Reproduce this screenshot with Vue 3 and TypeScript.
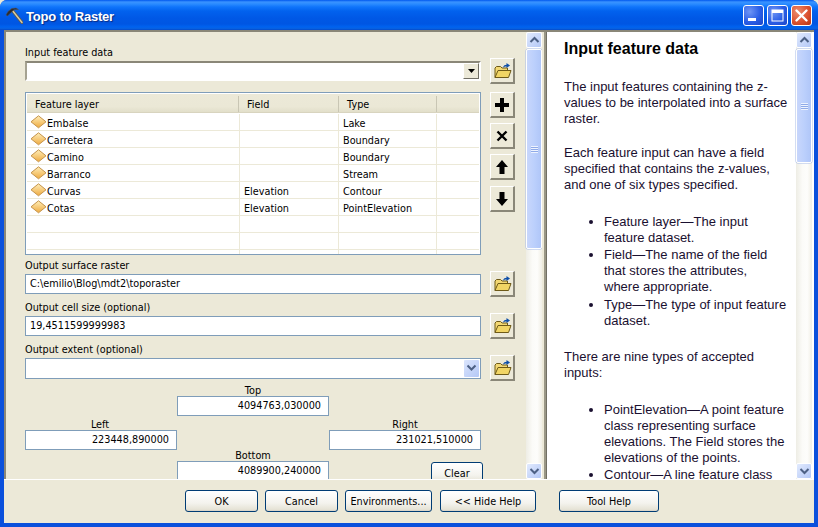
<script setup lang="ts">
interface Row { name: string; field: string; type: string }
const rows: Row[] = [
  { name: 'Embalse', field: '', type: 'Lake' },
  { name: 'Carretera', field: '', type: 'Boundary' },
  { name: 'Camino', field: '', type: 'Boundary' },
  { name: 'Barranco', field: '', type: 'Stream' },
  { name: 'Curvas', field: 'Elevation', type: 'Contour' },
  { name: 'Cotas', field: 'Elevation', type: 'PointElevation' },
  { name: '', field: '', type: '' },
  { name: '', field: '', type: '' },
  { name: '', field: '', type: '' },
]
</script>

<template>
  <div class="window">
    <header class="titlebar">
      <svg class="app-icon" width="18" height="18" viewBox="0 0 18 18">
        <path d="M7 4 L17 16.5" stroke="#5f5a4a" stroke-width="3" stroke-linecap="round" />
        <path d="M7 4 L17 16.5" stroke="#d8cda8" stroke-width="1.4" stroke-linecap="round" />
        <path d="M1 9 L3 5.5 L7 2.5 L11 2 L13.5 3.5 L9 3.8 L5.5 7 L2.5 10 Z" fill="#2c2c30" stroke="#55555a" stroke-width=".5" />
      </svg>
      <span class="title">Topo to Raster</span>
      <div class="caption-buttons">
        <div class="cap blue">
          <svg width="21" height="21" viewBox="0 0 21 21"><rect x="5" y="13" width="8" height="3" fill="#fff" /></svg>
        </div>
        <div class="cap blue">
          <svg width="21" height="21" viewBox="0 0 21 21"><rect x="5" y="5" width="11" height="11" fill="none" stroke="#fff" stroke-width="1" /><rect x="5" y="5" width="11" height="3" fill="#fff" /></svg>
        </div>
        <div class="cap red">
          <svg width="21" height="21" viewBox="0 0 21 21"><path d="M5.5 5.5 L15.5 15.5 M15.5 5.5 L5.5 15.5" stroke="#fff" stroke-width="2.4" stroke-linecap="round" /></svg>
        </div>
      </div>
    </header>

    <div class="client">
      <div class="panes">
        <section class="form-pane">
          <div class="form">
            <div class="label first">Input feature data</div>
            <div class="row">
              <div class="combo sunken">
                <div class="drop-classic">
                  <svg width="7" height="4" viewBox="0 0 7 4"><path d="M0 0 H7 L3.5 4 Z" fill="#000" /></svg>
                </div>
              </div>
              <button class="tool">
                <svg class="folder" width="18" height="17" viewBox="0 0 18 17">
                  <path d="M1 15.5 V6 L2.5 4.5 H6.5 L8 6 H13.5 V8" fill="#f3d873" stroke="#6e5a18" />
                  <path d="M1 15.5 L4 8.5 H17 L14.5 15.5 Z" fill="#f1d565" stroke="#6e5a18" />
                  <path d="M9 5.5 C9.5 3.5 11 2.8 12.5 2.8 V1 L16 3.5 L12.5 6 V4.4 C11 4.4 10 4.8 9 5.5 Z" fill="#0f4fa8" />
                </svg>
              </button>
            </div>

            <div class="list-row">
              <div class="table">
                <div class="thead">
                  <div class="th h1">Feature layer</div>
                  <div class="th h2">Field</div>
                  <div class="th c3">Type</div>
                  <div class="th c4"></div>
                </div>
                <div v-for="(r, i) in rows" :key="i" class="tr">
                  <div class="td c1">
                    <svg v-if="r.name" class="diamond" width="17" height="14" viewBox="0 0 17 14">
                      <defs>
                        <linearGradient id="gold" x1="0" y1="0" x2="0" y2="1">
                          <stop offset="0" stop-color="#ffeeb8" />
                          <stop offset="1" stop-color="#eeaa40" />
                        </linearGradient>
                      </defs>
                      <path d="M8.5 .8 L16 6.8 L8.5 12.8 L1 6.8 Z" fill="url(#gold)" stroke="#c4934a" />
                    </svg>
                    <span>{{ r.name }}</span>
                  </div>
                  <div class="td c2">{{ r.field }}</div>
                  <div class="td c3">{{ r.type }}</div>
                  <div class="td c4"></div>
                </div>
              </div>
              <div class="tools">
                <button class="tool">
                  <svg width="18" height="18" viewBox="0 0 18 18"><path d="M7 2 H11 V7 H16 V11 H11 V16 H7 V11 H2 V7 H7 Z" fill="#000" /></svg>
                </button>
                <button class="tool">
                  <svg width="14" height="14" viewBox="0 0 14 14"><path d="M2.5 2.5 L11.5 11.5 M11.5 2.5 L2.5 11.5" stroke="#000" stroke-width="2.4" /></svg>
                </button>
                <button class="tool">
                  <svg width="14" height="16" viewBox="0 0 14 16"><path d="M7 1 L13 8 H9.5 V15 H4.5 V8 H1 Z" fill="#000" /></svg>
                </button>
                <button class="tool last">
                  <svg width="14" height="16" viewBox="0 0 14 16"><path d="M7 15 L13 8 H9.5 V1 H4.5 V8 H1 Z" fill="#000" /></svg>
                </button>
              </div>
            </div>

            <div class="label gap">Output surface raster</div>
            <div class="row">
              <div class="input">C:\emilio\Blog\mdt2\toporaster</div>
              <button class="tool">
                <svg class="folder" width="18" height="17" viewBox="0 0 18 17">
                  <path d="M1 15.5 V6 L2.5 4.5 H6.5 L8 6 H13.5 V8" fill="#f3d873" stroke="#6e5a18" />
                  <path d="M1 15.5 L4 8.5 H17 L14.5 15.5 Z" fill="#f1d565" stroke="#6e5a18" />
                  <path d="M9 5.5 C9.5 3.5 11 2.8 12.5 2.8 V1 L16 3.5 L12.5 6 V4.4 C11 4.4 10 4.8 9 5.5 Z" fill="#0f4fa8" />
                </svg>
              </button>
            </div>

            <div class="label gap">Output cell size (optional)</div>
            <div class="row">
              <div class="input">19,4511599999983</div>
              <button class="tool">
                <svg class="folder" width="18" height="17" viewBox="0 0 18 17">
                  <path d="M1 15.5 V6 L2.5 4.5 H6.5 L8 6 H13.5 V8" fill="#f3d873" stroke="#6e5a18" />
                  <path d="M1 15.5 L4 8.5 H17 L14.5 15.5 Z" fill="#f1d565" stroke="#6e5a18" />
                  <path d="M9 5.5 C9.5 3.5 11 2.8 12.5 2.8 V1 L16 3.5 L12.5 6 V4.4 C11 4.4 10 4.8 9 5.5 Z" fill="#0f4fa8" />
                </svg>
              </button>
            </div>

            <div class="label gap">Output extent (optional)</div>
            <div class="row">
              <div class="input tall">
                <div class="drop-xp">
                  <svg width="11" height="8" viewBox="0 0 11 8"><path d="M1.5 1.5 L5.5 5.5 L9.5 1.5" fill="none" stroke="#4d6185" stroke-width="2" /></svg>
                </div>
              </div>
              <button class="tool">
                <svg class="folder" width="18" height="17" viewBox="0 0 18 17">
                  <path d="M1 15.5 V6 L2.5 4.5 H6.5 L8 6 H13.5 V8" fill="#f3d873" stroke="#6e5a18" />
                  <path d="M1 15.5 L4 8.5 H17 L14.5 15.5 Z" fill="#f1d565" stroke="#6e5a18" />
                  <path d="M9 5.5 C9.5 3.5 11 2.8 12.5 2.8 V1 L16 3.5 L12.5 6 V4.4 C11 4.4 10 4.8 9 5.5 Z" fill="#0f4fa8" />
                </svg>
              </button>
            </div>

            <div class="extent">
              <div class="elabel top-l">Top</div>
              <div class="input num top-i">4094763,030000</div>
              <div class="elabel left-l">Left</div>
              <div class="input num left-i">223448,890000</div>
              <div class="elabel right-l">Right</div>
              <div class="input num right-i">231021,510000</div>
              <div class="elabel bottom-l">Bottom</div>
              <div class="input num bottom-i">4089900,240000</div>
              <button class="xp-btn clear">Clear</button>
            </div>
          </div>

          <div class="scrollbar">
            <div class="sb-btn">
              <svg width="11" height="8" viewBox="0 0 11 8"><path d="M1.5 6 L5.5 2 L9.5 6" fill="none" stroke="#4d6185" stroke-width="2" /></svg>
            </div>
            <div class="thumb left-thumb"><span class="grip"></span></div>
            <div class="track"></div>
            <div class="sb-btn">
              <svg width="11" height="8" viewBox="0 0 11 8"><path d="M1.5 2 L5.5 6 L9.5 2" fill="none" stroke="#4d6185" stroke-width="2" /></svg>
            </div>
          </div>
        </section>

        <div class="splitter"></div>

        <section class="help-pane">
          <div class="help">
            <h1>Input feature data</h1>
            <p class="p1">The input features containing the z-<br />values to be interpolated into a surface<br />raster.</p>
            <p class="p2">Each feature input can have a field<br />specified that contains the z-values,<br />and one of six types specified.</p>
            <ul class="u1">
              <li>Feature layer—The input<br />feature dataset.</li>
              <li class="l2">Field—The name of the field<br />that stores the attributes,<br />where appropriate.</li>
              <li class="l3">Type—The type of input feature<br />dataset.</li>
            </ul>
            <p class="p3">There are nine types of accepted<br />inputs:</p>
            <ul class="u2">
              <li>PointElevation—A point feature<br />class representing surface<br />elevations. The Field stores the<br />elevations of the points.</li>
              <li class="l2">Contour—A line feature class</li>
            </ul>
          </div>
          <div class="scrollbar">
            <div class="sb-btn">
              <svg width="11" height="8" viewBox="0 0 11 8"><path d="M1.5 6 L5.5 2 L9.5 6" fill="none" stroke="#4d6185" stroke-width="2" /></svg>
            </div>
            <div class="thumb right-thumb"><span class="grip"></span></div>
            <div class="track"></div>
            <div class="sb-btn">
              <svg width="11" height="8" viewBox="0 0 11 8"><path d="M1.5 2 L5.5 6 L9.5 2" fill="none" stroke="#4d6185" stroke-width="2" /></svg>
            </div>
          </div>
        </section>
      </div>

      <footer class="footer">
        <button class="xp-btn w-ok">OK</button>
        <button class="xp-btn w-ok">Cancel</button>
        <button class="xp-btn w-env">Environments...</button>
        <button class="xp-btn w-hide">&lt;&lt; Hide Help</button>
        <button class="xp-btn w-tool">Tool Help</button>
      </footer>
    </div>
  </div>
</template>

<style>
html, body { margin: 0; background: #ece9d8; }
</style>

<style scoped>
.window {
  width: 818px;
  height: 527px;
  display: flex;
  flex-direction: column;
  box-sizing: border-box;
  overflow: hidden;
  border-radius: 7px 7px 0 0;
  background: #0a50dc;
  font-family: "DejaVu Sans", sans-serif;
  font-size: 9.7px;
  color: #000;
}
.titlebar {
  height: 30px;
  flex: none;
  display: flex;
  align-items: center;
  padding: 0 6px 0 5px;
  box-sizing: border-box;
  background: linear-gradient(180deg, #0058ee 0, #3a93ff 2px, #2a8bff 4px, #0f74fb 7px, #0262ee 11px, #0058e6 18px, #0056e3 24px, #0063f0 27px, #0a60dc 29px, #0043c8 30px);
}
.app-icon { flex: none; margin-right: 3px; }
.title {
  font-family: "Liberation Sans", sans-serif;
  font-weight: bold;
  font-size: 13px;
  letter-spacing: -0.2px;
  margin-top: 3px;
  color: #fff;
  text-shadow: 1px 1px 1px #0a2a80;
}
.caption-buttons { margin-left: auto; display: flex; gap: 3px; }
.cap {
  width: 21px;
  height: 21px;
  box-sizing: border-box;
  border: 1px solid #fff;
  border-radius: 3px;
  display: flex;
  align-items: center;
  justify-content: center;
}
.cap svg { flex: none; }
.cap.blue { background: radial-gradient(circle at 30% 30%, #6f95f5 0, #2a5ee6 55%, #1c45c8 100%); }
.cap.red { background: radial-gradient(circle at 30% 30%, #ec8d6f 0, #dc5230 55%, #b63414 100%); }

.client {
  flex: 1;
  min-height: 0;
  margin: 0 4px 4px;
  background: #ece9d8;
  display: flex;
  flex-direction: column;
}
.panes {
  height: 450px;
  flex: none;
  display: flex;
  box-sizing: border-box;
  border-top: 2px solid #8a8778;
  border-bottom: 1px solid #fff;
  overflow: hidden;
}
.form-pane {
  width: 538px;
  flex: none;
  display: flex;
  box-sizing: border-box;
  border-left: 2px solid #8a8778;
}
.form {
  width: 520px;
  flex: none;
  box-sizing: border-box;
  padding: 12px 0 0 19px;
  overflow: hidden;
}
.label { height: 13px; line-height: 15px; white-space: nowrap; }
.label.first { height: 14px; line-height: 17px; }
.label.gap { margin-top: 3px; }
.row { display: flex; align-items: center; height: 26px; width: 489px; }
.combo, .input { width: 456px; flex: none; box-sizing: border-box; margin-right: 9px; }
.combo.sunken {
  height: 20px;
  background: #fff;
  border-top: 2px solid #8a8778;
  border-left: 2px solid #a5a291;
  border-right: 2px solid #fff;
  border-bottom: 2px solid #fff;
  display: flex;
  justify-content: flex-end;
  align-items: center;
}
.drop-classic {
  width: 16px;
  height: 16px;
  box-sizing: border-box;
  background: #ece9d8;
  border-top: 1px solid #fff;
  border-left: 1px solid #fff;
  border-right: 1px solid #716f64;
  border-bottom: 1px solid #716f64;
  display: flex;
  align-items: center;
  justify-content: center;
}
.input {
  height: 20px;
  line-height: 18px;
  padding: 0 4px;
  background: #fff;
  border: 1px solid #7f9db9;
  white-space: nowrap;
}
.input.tall { height: 21px; display: flex; justify-content: flex-end; align-items: center; padding: 0 1px; }
.drop-xp {
  width: 15px;
  height: 17px;
  border-radius: 1px;
  background: linear-gradient(135deg, #dbe5fd, #b4c8f6);
  display: flex;
  align-items: center;
  justify-content: center;
}
.tool {
  flex: none;
  width: 25px;
  height: 26px;
  padding: 0;
  box-sizing: border-box;
  background: #ece9d8;
  border-top: 1px solid #fff;
  border-left: 1px solid #fff;
  border-right: 2px solid #8a8778;
  border-bottom: 2px solid #8a8778;
  display: flex;
  align-items: center;
  justify-content: center;
}
.folder { margin-left: 1px; }
.list-row { display: flex; margin-top: 8px; width: 489px; }
.table {
  width: 456px;
  height: 163px;
  flex: none;
  margin-right: 9px;
  box-sizing: border-box;
  border: 1px solid #7f9db9;
  padding: 1px;
  background: #fff;
  overflow: hidden;
}
.thead {
  height: 19px;
  margin-bottom: 1px;
  display: flex;
  background: linear-gradient(180deg, #ece9d8, #ebe8d6 70%, #e2dfca);
  border-bottom: 1px solid #d8d4bf;
  box-sizing: border-box;
}
.th { padding-left: 8px; box-sizing: border-box; border-right: 1px solid #c9c6b4; height: 16px; margin-top: 2px; line-height: 18px; }
.th.c4 { border-right: 0; }
.h1 { width: 212px; flex: none; }
.h2 { width: 100px; flex: none; }
.c1 { width: 213px; flex: none; }
.c2 { width: 99px; flex: none; }
.c3 { width: 98px; flex: none; }
.c4 { flex: 1; }
.tr { height: 17px; flex: none; display: flex; box-sizing: border-box; border-bottom: 1px solid #ece9d8; }
.td { height: 16px; line-height: 19px; padding-left: 4px; box-sizing: border-box; border-right: 1px solid #ece9d8; white-space: nowrap; }
.td.c1 { display: flex; align-items: center; padding-left: 3px; gap: 0; line-height: 18px; }
.td.c1 span { padding-top: 3px; }
.td.c4 { border-right: 0; }
.diamond { flex: none; margin-top: 0; }
.tools { display: flex; flex-direction: column; gap: 5px; }
.tool.last { margin-top: 1px; }

.extent {
  margin-top: 3px;
  width: 456px;
  display: grid;
  grid-template-columns: 152px 152px 152px;
  grid-template-rows: 12px 20px 2px 12px 20px 11px 20px;
}
.elabel { text-align: center; line-height: 14px; }
.elabel.bottom-l { line-height: 12px; }
.elabel.left-l { padding-right: 2px; }
.extent .input { width: auto; margin: 0; }
.num { text-align: right; padding-right: 7px; }
.top-l { grid-row: 1; grid-column: 2; }
.top-i { grid-row: 2; grid-column: 2; }
.left-l { grid-row: 4; grid-column: 1; }
.left-i { grid-row: 5; grid-column: 1; }
.right-l { grid-row: 4; grid-column: 3; }
.right-i { grid-row: 5; grid-column: 3; }
.bottom-l { grid-row: 6; grid-column: 2; }
.bottom-i { grid-row: 7; grid-column: 2; }
.xp-btn {
  font: inherit;
  color: #000;
  padding: 0;
  box-sizing: border-box;
  border: 1px solid #003c74;
  border-radius: 3px;
  background: linear-gradient(180deg, #fff 0, #f4f3ee 60%, #e6e3d6 92%, #d6d0c5 100%);
  white-space: nowrap;
}
.clear {
  grid-row: 7;
  grid-column: 3;
  justify-self: end;
  width: 52px;
  height: 22px;
  margin: 1px -2px 0 0;
}

.scrollbar {
  width: 16px;
  flex: none;
  display: flex;
  flex-direction: column;
  background: linear-gradient(90deg, #eeede5, #fbfbf8 40%, #fdfdfb 70%, #f1efe6);
}
.sb-btn {
  height: 16px;
  flex: none;
  box-sizing: border-box;
  border: 1px solid #fff;
  border-radius: 2px;
  background: linear-gradient(135deg, #e1eafe, #b4c8f6);
  display: flex;
  align-items: center;
  justify-content: center;
}
.thumb {
  flex: none;
  margin-top: 1px;
  box-sizing: border-box;
  border: 1px solid #fff;
  border-radius: 2px;
  background: linear-gradient(90deg, #c8d6fb, #bcd0fc 50%, #b0c6f8);
  display: flex;
  align-items: center;
  justify-content: center;
  box-shadow: 0 0 0 .5px #a8bce8;
}
.left-thumb { height: 200px; }
.right-thumb { height: 114px; }
.grip {
  width: 7px;
  height: 7px;
  background: repeating-linear-gradient(180deg, #eef3fe 0 1px, #8faae8 1px 2px);
}
.track { flex: 1; }

.splitter {
  width: 5px;
  flex: none;
  background: linear-gradient(90deg, #ece9d8 0 2px, #9a9786 2px 4px, #716f64 4px 5px);
}
.help-pane { flex: 1; display: flex; background: #fff; min-width: 0; }
.help {
  width: 249px;
  flex: none;
  box-sizing: border-box;
  padding: 9px 0 0 17px;
  overflow: hidden;
  font-family: "Liberation Sans", sans-serif;
  font-size: 13px;
  line-height: 16px;
  color: #1a1030;
  white-space: nowrap;
}
.help h1 { margin: 0; font-size: 16px; line-height: 16px; color: #000; }
.help p, .help ul { margin: 0; }
.help ul { padding-left: 40px; }
.p1 { margin-top: 22px !important; }
.p2 { margin-top: 18px !important; }
.u1 { margin-top: 21px !important; }
.u1 .l2 { margin-top: 1px; }
.u1 .l3 { margin-top: 2px; }
.p3 { margin-top: 20px !important; }
.u2 { margin-top: 21px !important; }
.u2 .l2 { margin-top: 1px; }

.footer {
  flex: 1;
  display: flex;
  align-items: flex-start;
  gap: 7px;
  padding: 10px 0 0 181px;
  box-sizing: border-box;
  background: #ece9d8;
}
.footer .xp-btn { height: 22px; }
.w-ok { width: 73px; }
.w-env { width: 87px; }
.w-hide { width: 96px; margin-left: 1px; }
.w-tool { width: 100px; margin-left: 16px; }
</style>
